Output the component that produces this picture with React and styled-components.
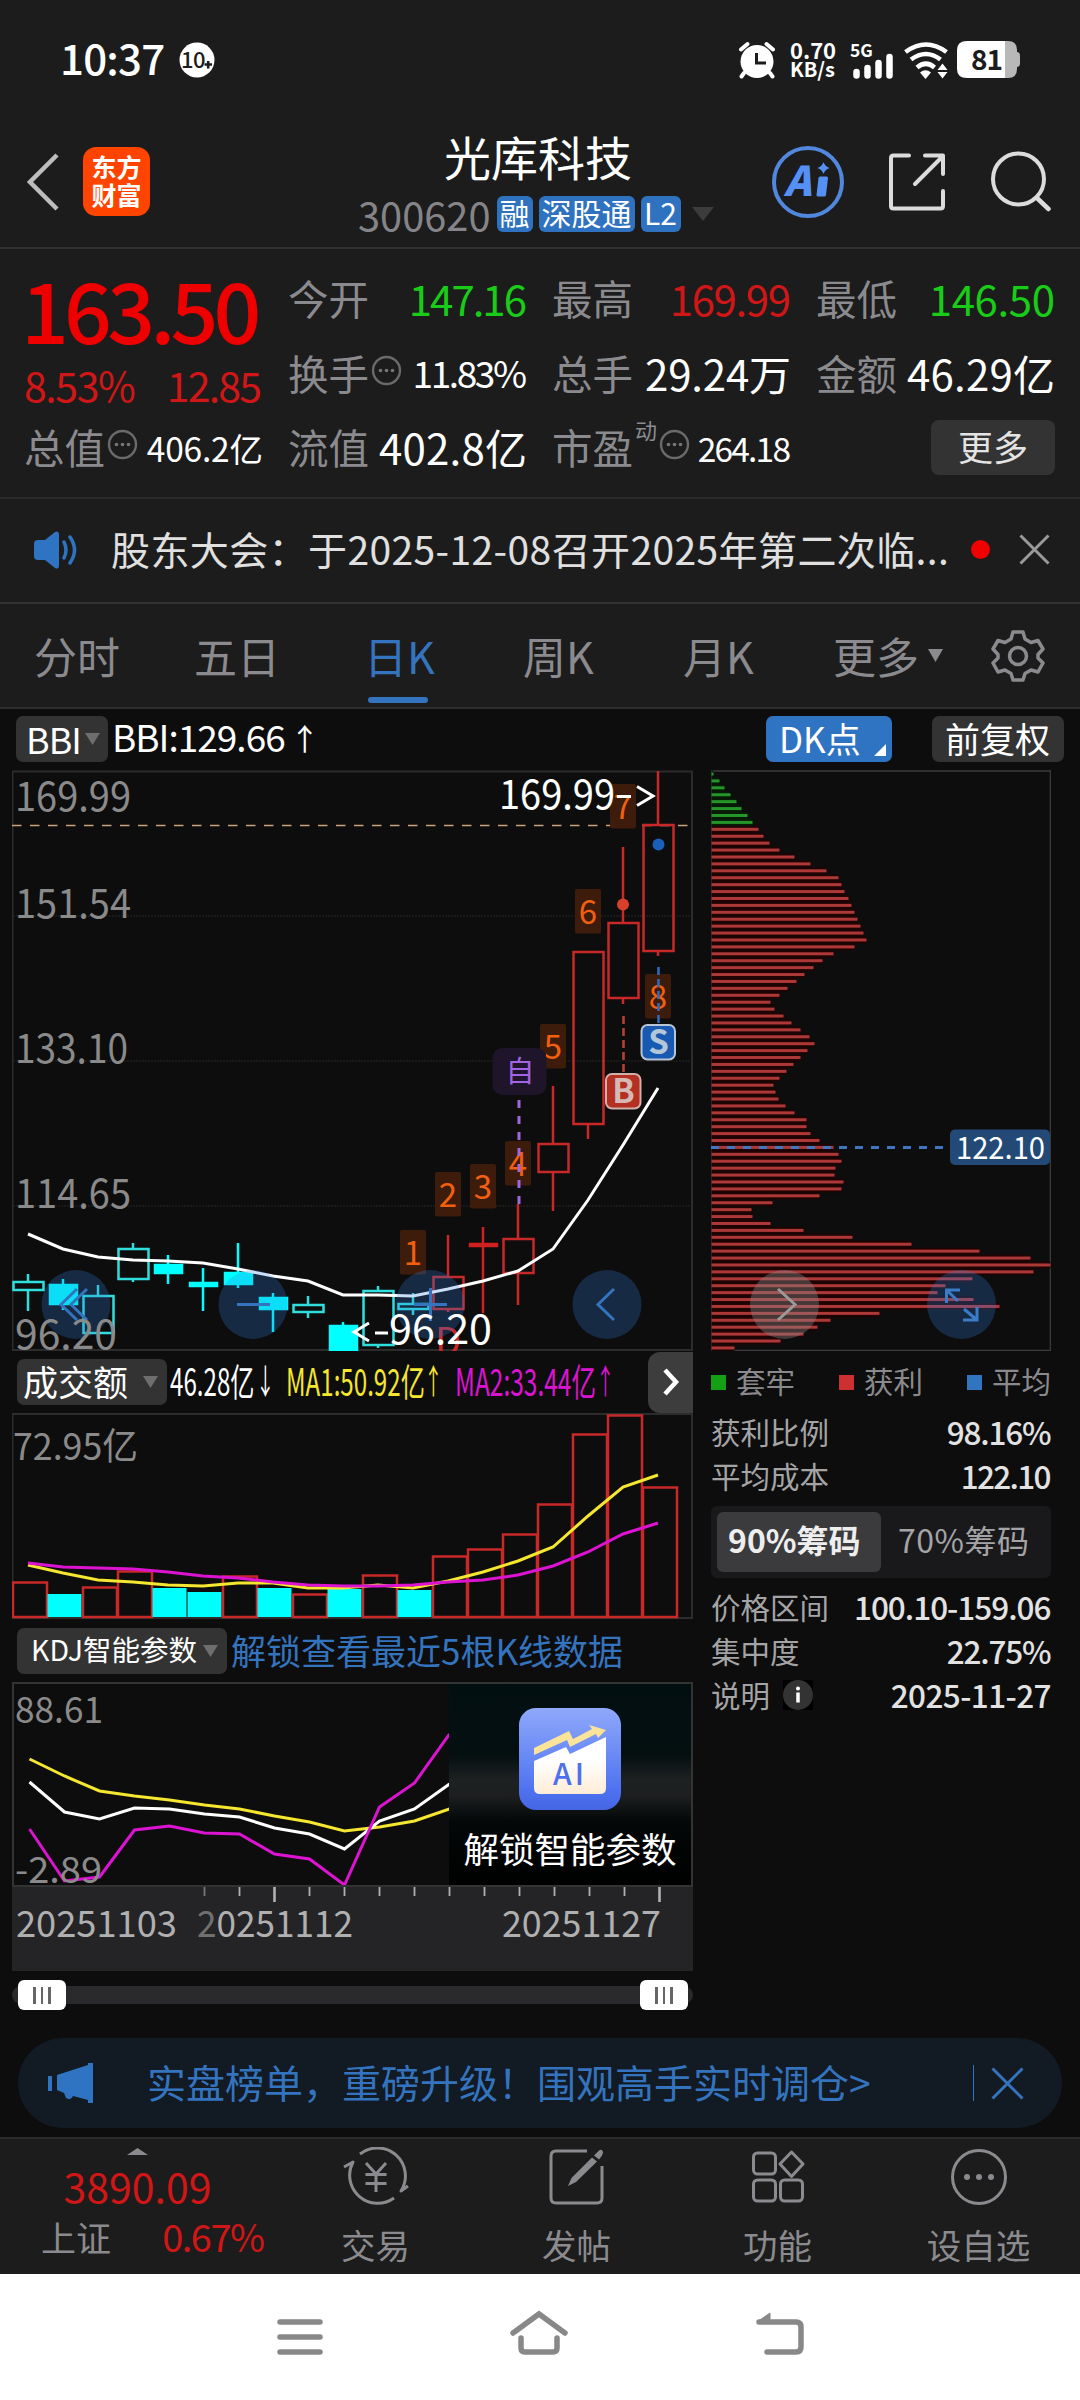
import React from 'react'
import styled, { createGlobalStyle } from 'styled-components'

const GlobalStyle = createGlobalStyle`
    * { box-sizing: border-box; }
    body {
        margin: 0;
        background: #0d0d0d;
        font-family: "Noto Sans CJK SC", "Noto Sans", sans-serif;
        color: #fff;
    }
    svg { display: block; flex-shrink: 0; }
    svg text { font-family: "Noto Sans CJK SC", "Noto Sans", sans-serif; }
`

const Screen = styled.div`
    width: 1080px;
    height: 2400px;
    display: flex;
    flex-direction: column;
    overflow: hidden;
    white-space: nowrap;
`

/* plain text piece: size, colour, tracking */
const Txt = styled.span`
    font-size: ${props => props.$size || 41}px;
    font-weight: ${props => props.$weight || 400};
    color: ${props => props.$color || '#fff'};
    letter-spacing: ${props => props.$ls || 0}px;
    margin-right: ${props => -(props.$ls || 0)}px;
    line-height: 1;
`

const StatusBar = styled.div`
    height: 119px;
    padding: 0 59px 0 60px;
    display: flex;
    align-items: center;
    justify-content: space-between;
    background: #1c1c1c;
`
const StatusSide = styled.div`
    display: flex;
    align-items: center;
    gap: ${props => props.$gap || 0}px;
    ${Txt} { margin-top: -5px; }
`
const Speed = styled.div`
    font-size: 20px;
    line-height: 20px;
    font-weight: 700;
    width: 45px;
    margin: -2px 15px 0 14px;
    text-align: center;
    div:first-child { font-size: 22px; }
`

const Header = styled.div`
    height: 130px;
    padding: 0 29px 0 26px;
    display: flex;
    align-items: center;
    background: #1c1c1c;
    border-bottom: 2px solid #303030;
    > svg { margin-top: -3px; }
`
const AppLogo = styled.div`
    width: 67px;
    height: 69px;
    margin-left: 23px;
    margin-top: -3px;
    border-radius: 13px;
    background: #ff4400;
    font-size: 25px;
    font-weight: 700;
    line-height: 28px;
    padding-top: 5px;
    text-align: center;
`
const TitleBox = styled.div`
    flex: 1;
    padding: 4px 0 0 210px;
    height: 130px;
`
const Title = styled.div`
    font-size: 47px;
    line-height: 67px;
    padding-left: 84px;
`
const CodeRow = styled.div`
    display: flex;
    align-items: center;
    gap: 6px;
    height: 36px;
    margin: 7px 0 0 -2px;
    ${Txt} { margin: -1px 0 0 0; }
    svg { margin-left: 5px; }
`
const Tag = styled.span`
    height: 36px;
    line-height: 33px;
    width: ${props => props.$w}px;
    border-radius: 6px;
    background: #2f72c0;
    font-size: 30px;
    display: flex;
    justify-content: center;
`
const HeaderIcons = styled.div`
    display: flex;
    align-items: center;
    gap: 41px;
    margin-top: -3px;
`

const Quote = styled.div`
    height: 250px;
    padding: 12px 24px 0 25px;
    background: #1c1c1c;
    border-bottom: 2px solid #2a2a2a;
    display: grid;
    grid-template-columns: repeat(4, 238px);
    grid-template-rows: repeat(3, 74.5px);
    column-gap: 26px;
`
const Cell = styled.div`
    display: flex;
    align-items: center;
    justify-content: space-between;
`
const Label = styled.span`
    display: flex;
    align-items: center;
    gap: 2px;
    font-size: 40.5px;
    line-height: 1;
    color: #8b8b8f;
    margin-left: -1px;
    sup {
        font-size: 22px;
        line-height: 1;
        align-self: flex-start;
        margin-top: -9px;
        vertical-align: baseline;
    }
    svg { margin-top: -5px; }
`
const PriceCell = styled.div`
    grid-row: span 2;
    display: flex;
    flex-direction: column;
    margin-right: 1px;
`
const Price = styled.div`
    font-size: 84px;
    line-height: 94px;
    font-weight: 500;
    letter-spacing: -4.8px;
    color: #ee0000;
    margin-left: -4px;
`
const Change = styled.div`
    display: flex;
    justify-content: space-between;
    padding-top: 9px;
    margin-left: -1px;
`
const MoreButton = styled.div`
    justify-self: end;
    align-self: center;
    width: 124px;
    height: 55px;
    margin-top: 1px;
    border-radius: 8px;
    background: #333;
    color: #e4e4e4;
    font-size: 35px;
    line-height: 51px;
    text-align: center;
`

const Notice = styled.div`
    height: 105px;
    padding: 0 29px 2px 33px;
    display: flex;
    align-items: center;
    background: #1c1c1c;
    border-bottom: 2px solid #333;
`
const NoticeText = styled.div`
    width: 849px;
    margin-left: 32px;
    font-size: 39px;
    line-height: 56px;
    letter-spacing: 0.4px;
    color: #e0e0e0;
    margin-top: -4px;
`
const Dot = styled.div`
    width: 19px;
    height: 19px;
    border-radius: 50%;
    background: #f00000;
    margin: 0 29px 0 11px;
`

const Tabs = styled.div`
    height: 105px;
    padding: 0 35px 0 34px;
    display: grid;
    grid-template-columns: 160px 170px 159px 160px 150px 1fr auto;
    align-items: center;
    background: #1c1c1c;
    border-bottom: 2px solid #2e2e2e;
`
const Tab = styled.div`
    display: flex;
    align-items: center;
    gap: 9px;
    font-size: 43px;
    height: 100px;
    color: ${props => props.$active ? '#3473bd' : '#8b8b8f'};
    span {
        height: 92px;
        line-height: 90px;
        display: flex;
        flex-direction: column;
    }
    span::after {
        content: '';
        width: 60px;
        height: 6px;
        margin: -3px 0 0 4px;
        border-radius: 3px;
        flex-shrink: 0;
        background: ${props => props.$active ? '#3473bd' : 'none'};
    }
`

const Toolbar = styled.div`
    height: 61px;
    padding: 7px 16px 0 16px;
    display: flex;
    align-items: flex-start;
`
const Chip = styled.div`
    height: 46px;
    width: ${props => props.$w}px;
    padding: 0 ${props => props.$pr || 8}px 0 ${props => props.$pl || 8}px;
    border-radius: 7px;
    background: ${props => props.$blue ? '#2f74c2' : '#333'};
    font-size: ${props => props.$size || 35}px;
    letter-spacing: ${props => props.$ls || 0}px;
    display: flex;
    align-items: center;
    justify-content: space-between;
    line-height: 42px;
    flex-shrink: 0;
    b { font-weight: 400; margin-top: -3px; }
    & + & { margin-left: 40px; }
`
const ToolText = styled.div`
    margin: 2px 0 0 4px;
    flex: 1;
    display: flex;
    gap: 4px;
    align-items: center;
`

const Main = styled.div`
    display: grid;
    grid-template-columns: 681px 340px;
    column-gap: 18px;
    padding-left: 12px;
    height: 1261px;
`
const Column = styled.div`
    display: flex;
    flex-direction: column;
`
const IndicatorRow = styled.div`
    height: ${props => props.$h}px;
    display: flex;
    align-items: center;
    padding-left: 5px;
    > ${Txt} { margin: -3px 0 0 4px; }
`
/* condensed figures, keeps the height and squeezes the width */
const Narrow = styled.div`
    width: ${props => props.$w}px;
    display: flex;
    font-size: 38px;
    line-height: 44px;
    margin: -4px -3px 0 3px;
    color: ${props => props.$color};
    span {
        width: ${props => props.$tw}px;
        flex-shrink: 0;
        transform: scaleX(${props => props.$k || 0.635});
        transform-origin: left center;
    }
    em {
        font-style: normal;
        font-size: 34px;
        width: 18px;
        transform: scaleX(0.55);
        transform-origin: left center;
    }
`
const NextButton = styled.div`
    margin-left: auto;
    width: 45px;
    height: 61px;
    border-radius: 12px 0 0 12px;
    background: #3d3d3d;
    display: flex;
    align-items: center;
    justify-content: center;
`
const Kdj = styled.div`
    display: flex;
    height: 205px;
    border: 2px solid #333;
`
const Locked = styled.div`
    flex: 1;
    display: flex;
    flex-direction: column;
    align-items: center;
    padding-top: 24px;
    background: linear-gradient(#020f10 0%, #040f10 35%, #1e2122 48%, #1c1e1f 56%, #040808 68%, #000 100%);
    div {
        font-size: 35.5px;
        line-height: 50px;
        margin-top: 13px;
    }
`
const Slider = styled.div`
    height: 18px;
    margin-top: 15px;
    padding: 0 5px 0 6px;
    border-radius: 9px;
    background: #2a2a2c;
    display: flex;
    align-items: center;
    justify-content: space-between;
`
const Handle = styled.div`
    width: 48px;
    height: 30px;
    border-radius: 6px;
    background: #fff;
    display: flex;
    align-items: center;
    justify-content: center;
    gap: 5px;
    i {
        width: 2.5px;
        height: 17px;
        background: #666;
    }
`

const Legend = styled.div`
    display: flex;
    justify-content: space-between;
    height: 60px;
    align-items: center;
    font-size: 29.5px;
    line-height: 1;
    color: #8a8a8e;
`
const LegendItem = styled.div`
    display: flex;
    align-items: center;
    gap: 10px;
    &::before {
        content: '';
        width: 15px;
        height: 15px;
        margin-top: 3px;
        background: ${props => props.$color};
    }
`
const InfoRow = styled.div`
    height: 44px;
    display: flex;
    align-items: center;
    justify-content: space-between;
    font-size: 29.5px;
    line-height: 36px;
    padding-bottom: 4px;
    color: #a4a4a6;
    b {
        font-weight: 500;
        font-size: 31.5px;
        letter-spacing: ${props => props.$ls || -1}px;
        margin-right: ${props => -(props.$ls || -1) - 0.5}px;
        color: #e2e2e2;
    }
    span {
        display: flex;
        align-items: center;
        gap: 13px;
    }
    svg { margin-top: 2px; }
`
const Segments = styled.div`
    height: 72px;
    margin: 7px 0 8px;
    padding: 6px;
    border-radius: 6px;
    background: #19191b;
    display: flex;
`
const Segment = styled.div`
    width: 164px;
    height: 60px;
    padding-left: 11px;
    border-radius: 6px;
    font-size: 32px;
    line-height: 55px;
    letter-spacing: ${props => props.$active ? 0 : 0.5}px;
    background: ${props => props.$active ? '#3b3b3d' : 'none'};
    color: ${props => props.$active ? '#eee' : '#a4a4a6'};
    font-weight: ${props => props.$active ? 700 : 400};
    & + & { padding-left: 17px; }
`

const Banner = styled.div`
    height: 90px;
    margin: 7px 18px 9px;
    padding: 0 38px 0 29px;
    border-radius: 45px;
    background: #121a24;
    display: flex;
    align-items: center;
    color: #3473bd;
    font-size: 39px;
    line-height: 56px;
    p { margin: -5px 0 0 54px; flex: 1; }
    i {
        width: 1.5px;
        height: 36px;
        margin-right: 17px;
        background: #3473bd;
    }
`

const BottomNav = styled.div`
    height: 137px;
    display: grid;
    grid-template-columns: 275px repeat(4, 201px);
    background: #1c1c1c;
    border-top: 2px solid #2c2c2c;
`
const IndexBox = styled.div`
    display: flex;
    flex-direction: column;
    align-items: center;
    padding-top: 9px;
    > ${Txt} { margin-top: 10px; }
    > div {
        display: flex;
        align-items: center;
        justify-content: space-between;
        width: 224px;
        margin: 11px 0 0 31px;
    }
`
const NavItem = styled.div`
    display: flex;
    flex-direction: column;
    align-items: center;
    padding-top: 8px;
    font-size: 34.5px;
    line-height: 40px;
    color: #8b8b8f;
    div { margin-top: 17px; }
`
const SystemNav = styled.div`
    flex: 1;
    background: #fff;
    display: flex;
    padding: 36px 0 0 277px;
    gap: 187px;
`

const BLUE = '#3473bd'
const RED = '#c82828'
const CYAN = '#00ffff'

const MoreDots = () => (
    <svg width="31" height="31" viewBox="0 0 31 31">
        <circle cx="15.5" cy="15.5" r="13.5" fill="none" stroke="#6a6a6c" strokeWidth="2.4" />
        {[9.5, 15.5, 21.5].map(x => <circle key={x} cx={x} cy="15.5" r="1.8" fill="#77777a" />)}
    </svg>
)

const Caret = ({ w = 15, h = 12, color = '#6e6e6e', up }) => (
    <svg width={w} height={h}>
        <path d={up ? `M0 ${h}L${w / 2} 0L${w} ${h}Z` : `M0 0H${w}L${w / 2} ${h}Z`} fill={color} />
    </svg>
)

const Cross = ({ size, color }) => (
    <svg width={size} height={size}>
        <path d={`M1.5 1.5L${size - 1.5} ${size - 1.5}M${size - 1.5} 1.5L1.5 ${size - 1.5}`} stroke={color} strokeWidth="3" />
    </svg>
)

const points = (ys, x0 = 28) => ys.map((y, i) => `${x0 + i * 35},${y}`).join(' ')

// type, high, body top, body bottom, low; o = hollow cyan, s = solid cyan, r = hollow red, d = solid red
const candles = [
    ['o', 1274, 1282, 1290, 1311],
    ['s', 1279, 1284, 1305, 1310],
    ['o', 1285, 1296, 1333, 1333],
    ['o', 1243, 1249, 1279, 1282],
    ['s', 1255, 1264, 1274, 1284],
    ['s', 1268, 1282, 1287, 1311],
    ['s', 1243, 1272, 1285, 1288],
    ['s', 1293, 1297, 1310, 1332],
    ['o', 1296, 1305, 1312, 1318],
    ['s', 1322, 1325, 1351, 1351],
    ['o', 1286, 1291, 1345, 1348],
    ['o', 1293, 1304, 1309, 1315],
    ['r', 1235, 1277, 1309, 1312],
    ['d', 1227, 1243, 1247, 1313],
    ['r', 1204, 1239, 1273, 1305],
    ['r', 1086, 1144, 1172, 1211],
    ['r', 951, 952, 1124, 1139],
    ['r', 847, 923, 998, 1004],
    ['r', 771, 825, 951, 956],
]
const bbi = [1234, 1249, 1257, 1260, 1261, 1263, 1269, 1276, 1281, 1295, 1295, 1296, 1289, 1281, 1271, 1249, 1200, 1145, 1088]
const counts = [[1, 1230], [2, 1172], [3, 1164], [4, 1141], [5, 1024], [6, 889], [7, 784], [8, 974]]

const Candle = ({ x, data }) => {
    const [type, high, top, bottom, low] = data
    const hollow = type === 'o' || type === 'r'
    const color = type === 'o' ? '#30dede' : type === 's' ? CYAN : type === 'r' ? RED : '#d02020'
    return (
        <g stroke={color} strokeWidth="2.5">
            <path d={`M${x} ${high}V${top}M${x} ${bottom}V${low}`} />
            {hollow
                ? <rect x={x - 14.5} y={top} width="30" height={bottom - top} fill="none" />
                : <rect x={x - 14} y={top} width="29" height={bottom - top} fill={color} strokeWidth="0.5" />}
        </g>
    )
}

const Fit = ({ x, y, w, size = 41, color = '#8a8a8a', children, ...rest }) => (
    <text x={x} y={y} fontSize={size} fill={color} textLength={w} lengthAdjust="spacingAndGlyphs" {...rest}>{children}</text>
)

const KLine = () => (
    <svg width="681" height="581" viewBox="12 770 681 581">
        <rect x="12.5" y="771.5" width="679.5" height="578.5" fill="none" stroke="#2c2c2c" strokeWidth="2" />
        {[916, 1061, 1206].map(y => <path key={y} d={`M13 ${y}H692`} stroke="#262626" strokeDasharray="2 1" strokeWidth="1.2" />)}
        <path d="M12 825.5H690" stroke="#c9a27c" strokeWidth="1.4" strokeDasharray="9.5 8.5" />
        {counts.map(([n, y], i) => (
            <g key={n}>
                <rect x={400 + i * 35} y={y} width="26" height="44.5" rx="2" fill="#3d1c0c" />
                <text x={413 + i * 35} y={y + 35} fontSize="33" fill="#f2600f" textAnchor="middle">{n}</text>
            </g>
        ))}
        {candles.map((c, i) => <Candle key={i} x={28 + i * 35} data={c} />)}
        <text x="435" y="1355" fontSize="38" fill={RED}>D</text>
        <rect x="492.5" y="1048" width="54" height="47" rx="10" fill="#1f152b" />
        <text x="520" y="1082" fontSize="29" fill="#a264e4" textAnchor="middle">自</text>
        <path d="M519 1100V1204" stroke="#a068e0" strokeWidth="3" strokeDasharray="8 8" />
        <circle cx="623" cy="904.5" r="6" fill="#d8402c" />
        <circle cx="658.5" cy="844.5" r="6" fill="#1a5fb8" />
        <path d="M658.5 967V1023" stroke="#3468b8" strokeWidth="2.6" strokeDasharray="8 4" />
        <path d="M623.5 1016V1072" stroke="#b34038" strokeWidth="2.6" strokeDasharray="8 4" />
        <rect x="641.5" y="1025" width="33.5" height="34.5" rx="6" fill="#185ab2" stroke="#b8c4d4" strokeWidth="2" />
        <text x="658.5" y="1054" fontSize="33" fontWeight="700" fill="#b4c6da" textAnchor="middle">S</text>
        <rect x="606" y="1074" width="34.5" height="34.5" rx="6" fill="#b43022" stroke="#d0b0a8" strokeWidth="2" />
        <text x="623.5" y="1103" fontSize="33" fontWeight="700" fill="#d6b8b4" textAnchor="middle">B</text>
        <polyline points={points(bbi)} fill="none" stroke="#fff" strokeWidth="3" />
        {[76, 253, 430, 607].map(x => <circle key={x} cx={x} cy="1304.5" r="34.5" fill="rgba(49,129,225,0.26)" />)}
        <g fill="none" stroke={BLUE} strokeWidth="3">
            <path d="M77 1289L61 1304.500L77 1320M87 1289L71 1304.500L87 1320" />
            <path d="M237 1304.500H270" />
            <path d="M414 1304.500H447M430.500 1288V1321" />
            <path d="M614 1289L598 1304.500L614 1320" />
        </g>
        <Fit x="15" y="811" w="116">169.99</Fit>
        <Fit x="15" y="917.500" w="116">151.54</Fit>
        <Fit x="15" y="1063" w="113">133.10</Fit>
        <Fit x="15" y="1208" w="116">114.65</Fit>
        <Fit x="15" y="1348.500" w="102">96.20</Fit>
        <Fit x="499" y="809" w="116" color="#fff">169.99</Fit>
        <path d="M617 796.500H631M637 786.500L653 796L637 805.500" fill="none" stroke="#fff" strokeWidth="3" />
        <path d="M369 1323L354 1332L369 1341M375 1333H388" fill="none" stroke="#fff" strokeWidth="3" />
        <Fit x="389" y="1344" w="103" color="#fff">96.20</Fit>
    </svg>
)

// top of each bar, solid when the day closed lower
const volumes = [1582, 1594, 1587, 1571, 1588, 1592, 1576, 1588, 1594, 1589, 1575, 1590, 1556, 1549, 1534, 1504, 1434, 1415, 1487]
const downDays = [1, 4, 5, 7, 9, 11]
const ma1 = [1565, 1573, 1580, 1582, 1585, 1586, 1583, 1583, 1588, 1588, 1585, 1588, 1581, 1572, 1561, 1547, 1516, 1487, 1475]
const ma2 = [1563, 1567, 1568, 1569, 1572, 1576, 1578, 1582, 1585, 1586, 1586, 1585, 1582, 1580, 1575, 1566, 1552, 1534, 1523]

const Volume = () => (
    <svg width="681" height="206" viewBox="12 1413 681 206">
        <rect x="12.5" y="1414" width="679.5" height="204" fill="none" stroke="#2c2c2c" strokeWidth="2" />
        <Fit x="13" y="1459.500" w="125" size="37">72.95亿</Fit>
        {volumes.map((y, i) => downDays.includes(i)
            ? <rect key={i} x={12.5 + i * 35} y={y} width="34" height={1617 - y} fill={CYAN} />
            : <rect key={i} x={13 + i * 35} y={y + 0.5} width="34" height={1616.500 - y} fill="none" stroke={RED} strokeWidth="2.5" />)}
        <polyline points={points(ma1)} fill="none" stroke="#f5e630" strokeWidth="3" />
        <polyline points={points(ma2)} fill="none" stroke="#dc14d2" strokeWidth="3" />
    </svg>
)

const lineD = [1759, 1776, 1791, 1796, 1800, 1805, 1809, 1816, 1822, 1831, 1827, 1821, 1809]
const lineK = [1782, 1812, 1819, 1808, 1809, 1814, 1817, 1828, 1834, 1849, 1821, 1809, 1784]
const lineJ = [1829, 1881, 1877, 1830, 1826, 1833, 1834, 1854, 1859, 1885, 1807, 1783, 1734]

const KdjChart = () => (
    <svg width="435" height="201" viewBox="14 1684 435 201">
        <g fill="none" strokeWidth="3">
            <polyline points={points(lineD, 29.5)} stroke="#f5e630" />
            <polyline points={points(lineK, 29.5)} stroke="#fff" />
            <polyline points={points(lineJ, 29.5)} stroke="#dc14d2" />
        </g>
        <Fit x="15" y="1722.500" w="88" size="37">88.61</Fit>
        <Fit x="15" y="1883" w="87" size="37">-2.89</Fit>
    </svg>
)

const AiBadge = () => (
    <svg width="102" height="102" viewBox="0 0 102 102">
        <defs>
            <linearGradient id="tile" x1="0" y1="0" x2="0" y2="1">
                <stop offset="0" stopColor="#8fa9fb" />
                <stop offset="0.8" stopColor="#4f73f0" />
                <stop offset="1" stopColor="#4565e4" />
            </linearGradient>
            <linearGradient id="card" x1="0" y1="0" x2="0" y2="1">
                <stop offset="0.4" stopColor="#fff" />
                <stop offset="1" stopColor="#feecd6" />
            </linearGradient>
        </defs>
        <rect width="102" height="102" rx="17" fill="url(#tile)" />
        <path d="M15 53L47 39L51 46L87 29V80Q87 86 81 86H21Q15 86 15 80Z" fill="url(#card)" />
        <path d="M15 40L50 23L54 31L73 21L70 17L87 22L79 30L77 26L51 39L48 32L15 47Z" fill="#fbe39a" />
        <text x="51" y="77" fontSize="30" fontWeight="500" fill="#4d70ec" textAnchor="middle" letterSpacing="3">AI</text>
    </svg>
)

const TimeAxis = () => (
    <svg width="681" height="84" viewBox="12 1888 681 84">
        <rect x="12" y="1888" width="681" height="84" fill="#242426" />
        {Array.from({ length: 14 }, (_, i) => {
            const tall = i === 2 || i === 13
            return <path key={i} d={`M${204.5 + i * 35} 1888V${tall ? 1903 : 1897}`} stroke={i ? '#b0b0b0' : '#777'} strokeWidth={tall ? 2.6 : 1.8} />
        })}
        <Fit x="16" y="1938" w="161" size="37" color="#b0b0b0">20251103</Fit>
        <Fit x="197" y="1938" w="156" size="37" color="#b0b0b0"><tspan fill="#707070">2</tspan>0251112</Fit>
        <Fit x="502" y="1938" w="159" size="37" color="#b0b0b0">20251127</Fit>
    </svg>
)

const chips = [
    2, 8, 13, 19, 25, 30, 36, 41, 47, 52, 58, 68, 83, 99, 115, 127, 130, 133, 137, 140, 143, 146, 149, 152, 155, 143, 122, 111,
    102, 93, 85, 76, 68, 59, 63, 72, 80, 89, 98, 103, 96, 89, 82, 75, 68, 62, 64, 67, 74, 83, 95, 95, 99, 108, 122, 127, 130,
    124, 123, 132, 130, 108, 61, 40, 41, 59, 92, 141, 200, 268, 319, 339, 322, 261, 234, 226, 262, 288, 168, 119, 106, 92, 69, 23,
]

const ChipChart = () => (
    <svg width="340" height="581" viewBox="711 770 340 581">
        <rect x="711.5" y="771" width="339" height="579.5" fill="none" stroke="#3a3a3a" strokeWidth="1.6" />
        {chips.map((w, i) => {
            const y = 774 + i * 6.915
            return (
                <g key={i}>
                    <rect x="711.5" y={y - 3.4} width={w} height="6.900" fill={i < 8 ? '#071b07' : '#200404'} />
                    <rect x="711.5" y={y - 1.5} width={w} height="3" fill={i < 8 ? '#25962a' : '#ac3838'} />
                </g>
            )
        })}
        <path d="M711 1147.500H944" stroke="#3f78be" strokeWidth="3" strokeDasharray="8 8" />
        <rect x="950" y="1129.500" width="100" height="35.500" rx="5" fill="#234a76" />
        <Fit x="956" y="1158.500" w="89" size="31" color="#fff">122.10</Fit>
        <circle cx="784.5" cy="1304.500" r="34.500" fill="rgba(140,140,140,0.38)" />
        <path d="M778 1289L795 1304.500L778 1320" fill="none" stroke="#9a9a9a" strokeWidth="3" />
        <circle cx="961.500" cy="1304.500" r="34.500" fill="rgba(49,129,225,0.26)" />
        <path d="M960 1290H946.500V1303M946.500 1290L958 1301M963 1320H977V1307M977 1320L964 1309" fill="none" stroke="#3a7cc8" strokeWidth="3" />
    </svg>
)

const SignalIcon = styled.svg`
    margin-right: 9px;
`
const WifiIcon = styled.svg`
    margin-right: 8px;
`

const StatusIcons = () => (
    <StatusSide>
        <svg width="38" height="38" viewBox="0 0 38 38">
            <circle cx="19" cy="20.500" r="16.500" fill="#fff" />
            <path d="M3 8.500L9.500 3M35 8.500L28.500 3" stroke="#fff" strokeWidth="4" strokeLinecap="round" fill="none" />
            <path d="M6 32L3.500 35.500M32 32L34.500 35.500" stroke="#fff" strokeWidth="4" strokeLinecap="round" />
            <path d="M18.500 12V22H28" stroke="#1c1c1c" strokeWidth="3" fill="none" />
        </svg>
        <Speed><div>0.70</div><div>KB/s</div></Speed>
        <SignalIcon width="44" height="38" viewBox="0 0 44 38">
            <text x="0" y="15.500" fontSize="17.500" fontWeight="700" fill="#fff">5G</text>
            <path d="M6.500 34.500V31M17.500 34.500V27M28.500 34.500V22M39.500 34.500V16" stroke="#fff" strokeWidth="6.500" strokeLinecap="round" />
        </SignalIcon>
        <WifiIcon width="46" height="38" viewBox="0 0 46 38">
            <g fill="none" stroke="#fff" strokeWidth="4.600">
                <path d="M2.500 11Q23 -4 43.500 11" />
                <path d="M8 18.500Q23 7.500 37.500 18.500" />
                <path d="M14 26.500Q23 19 31.500 26.500" />
            </g>
            <path d="M17 31.500Q22.500 27 28 31.500L22.500 38Z" fill="#fff" />
            <path d="M34.500 29L39.500 22.500L44.500 29ZM34.500 31H44.500L39.500 37.500Z" fill="#fff" />
        </WifiIcon>
        <svg width="64" height="37" viewBox="0 0 64 37">
            <path d="M48 0H51Q60 0 60 9V28Q60 37 51 37H48Z" fill="#b8b8b8" />
            <path d="M60 11Q63 11 63 15V22Q63 26 60 26Z" fill="#b8b8b8" />
            <path d="M10 0H48V37H10Q0 37 0 28V9Q0 0 10 0Z" fill="#fff" />
            <text x="29.500" y="28.500" fontSize="28" fontWeight="700" fill="#1c1c1c" textAnchor="middle" letterSpacing="-1">81</text>
        </svg>
    </StatusSide>
)

const quoteCells = [
    { label: '今开', value: '147.16', color: '#18cc18', ls: -2 },
    { label: '最高', value: '169.99', color: '#d01616', ls: -1.4 },
    { label: '最低', value: '146.50', color: '#18cc18', ls: -0.4 },
    { label: '换手', value: '11.83%', size: 37, dots: true, ls: -2.4 },
    { label: '总手', value: '29.24万', ls: -0.2 },
    { label: '金额', value: '46.29亿', ls: 0.2 },
    { label: '总值', value: '406.2亿', size: 33.500, dots: true, ls: -0.2 },
    { label: '流值', value: '402.8亿', ls: 0.2 },
    { label: '市盈', sup: '动', value: '264.18', size: 33.500, dots: true, ls: -1.8 },
]

const App = () => {
    return (
        <Screen>
            <GlobalStyle />
            <StatusBar>
                <StatusSide $gap={14}>
                    <Txt $size={42} $weight={500} $ls={-0.8}>10:37</Txt>
                    <svg width="36" height="36" viewBox="0 0 36 36">
                        <circle cx="18" cy="18" r="17.500" fill="#fff" />
                        <text x="2" y="26" fontSize="22" fontWeight="500" fill="#1c1c1c" letterSpacing="-0.5">10</text>
                        <path d="M25.500 22.500H33M29.200 19V26.500" stroke="#1c1c1c" strokeWidth="2.6" />
                    </svg>
                </StatusSide>
                <StatusIcons />
            </StatusBar>

            <Header>
                <svg width="34" height="62" viewBox="0 0 34 62">
                    <path d="M31 4L4 31L31 58" fill="none" stroke="#bdbdbd" strokeWidth="4.500" />
                </svg>
                <AppLogo>东方<br />财富</AppLogo>
                <TitleBox>
                    <Title>光库科技</Title>
                    <CodeRow>
                        <Txt $size={39.800} $color="#858589">300620</Txt>
                        <Tag $w={36}>融</Tag>
                        <Tag $w={96}>深股通</Tag>
                        <Tag $w={40}>L2</Tag>
                        <Caret w={22} h={14} color="#3c3c3c" />
                    </CodeRow>
                </TitleBox>
                <HeaderIcons>
                    <svg width="74" height="74" viewBox="0 0 74 74">
                        <circle cx="37" cy="37" r="34" fill="none" stroke="#5187dd" strokeWidth="4" />
                        <text x="13" y="50.500" fontSize="41" fontWeight="900" fontStyle="italic" fill="#5590f5">A</text>
                        <path d="M49 31.500H55.500Q57 31.500 57 33L55 50Q54.800 51.500 53.500 51.500H47Q45.500 51.500 45.500 50L47.500 33Q47.700 31.500 49 31.500Z" fill="#5590f5" />
                        <path d="M52.500 17Q54 21.500 58.500 23Q54 24.500 52.500 29Q51 24.500 46.500 23Q51 21.500 52.500 17Z" fill="#5590f5" />
                    </svg>
                    <svg width="62" height="62" viewBox="0 0 62 62">
                        <path d="M23 4.500H7.500Q5 4.500 5 7V55Q5 57.500 7.500 57.500H54.500Q57 57.500 57 55V40M39 4.500H57V23M56 6L29 33" fill="none" stroke="#dcdcdc" strokeWidth="4" strokeLinecap="round" strokeLinejoin="round" />
                    </svg>
                    <svg width="62" height="62" viewBox="0 0 62 62">
                        <circle cx="29.500" cy="28" r="25.500" fill="none" stroke="#dcdcdc" strokeWidth="4" />
                        <path d="M48 47L59.500 58" stroke="#dcdcdc" strokeWidth="4.500" strokeLinecap="round" />
                    </svg>
                </HeaderIcons>
            </Header>

            <Quote>
                <PriceCell>
                    <Price>163.50</Price>
                    <Change>
                        <Txt $color="#d01616" $ls={-1.400}>8.53%</Txt>
                        <Txt $color="#d01616" $ls={-1.800}>12.85</Txt>
                    </Change>
                </PriceCell>
                {quoteCells.map(c => (
                    <Cell key={c.label}>
                        <Label>{c.label}{c.sup && <sup>{c.sup}</sup>}{c.dots && <MoreDots />}</Label>
                        <Txt $size={c.size || 42} $color={c.color} $ls={c.ls}>{c.value}</Txt>
                    </Cell>
                ))}
                <MoreButton>更多</MoreButton>
            </Quote>

            <Notice>
                <svg width="46" height="38" viewBox="0 0 46 38">
                    <path d="M5 9H12L22 1Q26 -1 26 4V34Q26 39 22 37L12 29H5Q1 29 1 25V13Q1 9 5 9Z" fill="#2f74c2" />
                    <path d="M31 11Q35 19 31 27M37 6Q46 19 37 32" fill="none" stroke="#2f74c2" strokeWidth="3.500" strokeLinecap="round" />
                </svg>
                <NoticeText>股东大会：于2025-12-08召开2025年第二次临...</NoticeText>
                <Dot />
                <Cross size={31} color="#9a9a9a" />
            </Notice>

            <Tabs>
                <Tab><span>分时</span></Tab>
                <Tab><span>五日</span></Tab>
                <Tab $active><span>日K</span></Tab>
                <Tab><span>周K</span></Tab>
                <Tab><span>月K</span></Tab>
                <Tab><span>更多</span><Caret color="#8b8b8f" w={15} h={13} /></Tab>
                <svg width="54" height="54" viewBox="0 0 54 54">
                    <path d="M22 3H32L34 10L40 13.500L47 11.500L52 20L47 25.500V29L52 34L47 43L40 41L34 44.500L32 51H22L20 44.500L14 41L7 43L2 34L7 29V25.500L2 20L7 11.500L14 13.500L20 10Z" fill="none" stroke="#8b8b8f" strokeWidth="3.500" strokeLinejoin="round" />
                    <circle cx="27" cy="27" r="8.500" fill="none" stroke="#8b8b8f" strokeWidth="3.500" />
                </svg>
            </Tabs>

            <Toolbar>
                <Chip $w={92} $pl={10} $pr={8} $size={36} $ls={-1}><b>BBI</b><Caret w={15} /></Chip>
                <ToolText><Txt $size={37} $ls={-1}>BBI:129.66</Txt><Txt $size={30}>↑</Txt></ToolText>
                <Chip $blue $w={126} $pl={13} $pr={6}>
                    <b>DK点</b>
                    <svg width="12" height="34"><path d="M12 22V34H0Z" fill="#fff" /></svg>
                </Chip>
                <Chip $w={132} $pl={13}><b>前复权</b></Chip>
            </Toolbar>

            <Main>
                <Column>
                    <KLine />
                    <IndicatorRow $h={62}>
                        <Chip $w={150} $pl={6} $pr={9}><b>成交额</b><Caret w={15} h={12} /></Chip>
                        <Narrow $w={116} $tw={86} $color="#fff"><span>46.28亿</span><em>↓</em></Narrow>
                        <Narrow $w={169} $tw={138} $color="#f5e630"><span>MA1:50.92亿</span><em>↑</em></Narrow>
                        <Narrow $w={160} $tw={141} $k={0.645} $color="#dc14d2"><span>MA2:33.44亿</span><em>↑</em></Narrow>
                        <NextButton>
                            <svg width="18" height="30" viewBox="0 0 18 30"><path d="M3 3L14 15L3 27" fill="none" stroke="#fff" strokeWidth="4.500" /></svg>
                        </NextButton>
                    </IndicatorRow>
                    <Volume />
                    <IndicatorRow $h={63}>
                        <Chip $w={210} $pl={14} $pr={9} $size={28.500}><b>KDJ智能参数</b><Caret w={15} h={12} /></Chip>
                        <Txt $size={35} $color={BLUE}>解锁查看最近5根K线数据</Txt>
                    </IndicatorRow>
                    <Kdj>
                        <KdjChart />
                        <Locked>
                            <AiBadge />
                            <div>解锁智能参数</div>
                        </Locked>
                    </Kdj>
                    <TimeAxis />
                    <Slider>
                        <Handle><i /><i /><i /></Handle>
                        <Handle><i /><i /><i /></Handle>
                    </Slider>
                </Column>

                <Column>
                    <ChipChart />
                    <Legend>
                        <LegendItem $color="#14a014">套牢</LegendItem>
                        <LegendItem $color="#cc3030">获利</LegendItem>
                        <LegendItem $color="#3174c0">平均</LegendItem>
                    </Legend>
                    <InfoRow $ls={-1.200}>获利比例<b>98.16%</b></InfoRow>
                    <InfoRow $ls={-1.700}>平均成本<b>122.10</b></InfoRow>
                    <Segments>
                        <Segment $active>90%筹码</Segment>
                        <Segment>70%筹码</Segment>
                    </Segments>
                    <InfoRow $ls={-1}>价格区间<b>100.10-159.06</b></InfoRow>
                    <InfoRow $ls={-1.200}>集中度<b>22.75%</b></InfoRow>
                    <InfoRow $ls={-0.600}>
                        <span>
                            说明
                            <svg width="30" height="30" viewBox="0 0 30 30">
                                <rect width="30" height="30" fill="#000" />
                                <circle cx="15" cy="15" r="15" fill="#333" />
                                <circle cx="15" cy="8.500" r="2" fill="#fff" />
                                <path d="M15 12.500V22.500" stroke="#fff" strokeWidth="3.500" />
                            </svg>
                        </span>
                        <b>2025-11-27</b>
                    </InfoRow>
                </Column>
            </Main>

            <Banner>
                <svg width="46" height="40" viewBox="0 0 46 40">
                    <path d="M1 13H5V28H1ZM10 12L41 2V0H46V40H41V37L26 33Q24 38 19 35L17 30L10 27Z" fill="#2f74c2" />
                </svg>
                <p>实盘榜单，重磅升级！围观高手实时调仓&gt;</p>
                <i />
                <Cross size={33} color={BLUE} />
            </Banner>

            <BottomNav>
                <IndexBox>
                    <Caret up w={21} h={7} color="#8b8b8f" />
                    <Txt $size={41} $color="#d01616">3890.09</Txt>
                    <div>
                        <Txt $size={35} $color="#8b8b8f">上证</Txt>
                        <Txt $size={38} $color="#d01616" $ls={-1.500}>0.67%</Txt>
                    </div>
                </IndexBox>
                <NavItem>
                    <svg width="66" height="60" viewBox="0 0 66 60">
                        <g fill="none" stroke="#8b8b8f" strokeWidth="3">
                            <path d="M17 7A28 28 0 0 1 58 44L65 39M51 51A28 28 0 0 1 10 15L1 20" strokeLinejoin="round" />
                            <path d="M23 16L33 27L43 16M33 27V45M22.500 27.500H43.500M22.500 36.500H43.500" />
                        </g>
                    </svg>
                    <div>交易</div>
                </NavItem>
                <NavItem>
                    <svg width="58" height="60" viewBox="0 0 58 60">
                        <path d="M39 4H8Q3 4 3 9V51Q3 56 8 56H49Q54 56 54 51V19" fill="none" stroke="#8b8b8f" strokeWidth="3" />
                        <path d="M44 10.500L49 14.500L28 35L20 39L23.500 31ZM46 8.500L51 3.500Q54 1.500 55 5Q55 8 51 12.500Z" fill="#8b8b8f" />
                    </svg>
                    <div>发帖</div>
                </NavItem>
                <NavItem>
                    <svg width="54" height="60" viewBox="0 0 54 60">
                        <g fill="none" stroke="#8b8b8f" strokeWidth="3">
                            <rect x="2.500" y="6" width="22" height="21" rx="4" />
                            <rect x="2.500" y="33" width="22" height="21" rx="4" />
                            <rect x="29.500" y="33" width="22" height="21" rx="4" />
                            <path d="M40.500 5L52 17L40.500 29.500L29 17Z" strokeLinejoin="round" />
                        </g>
                    </svg>
                    <div>功能</div>
                </NavItem>
                <NavItem>
                    <svg width="58" height="60" viewBox="0 0 58 60">
                        <circle cx="29" cy="30" r="26.500" fill="none" stroke="#8b8b8f" strokeWidth="3" />
                        {[17, 29, 41].map(x => <circle key={x} cx={x} cy="30" r="3" fill="#8b8b8f" />)}
                    </svg>
                    <div>设自选</div>
                </NavItem>
            </BottomNav>

            <SystemNav>
                <svg width="46" height="48" viewBox="0 0 46 48">
                    <path d="M3 12H43M3 27H43M3 42H43" stroke="#888" strokeWidth="5.500" strokeLinecap="round" />
                </svg>
                <svg width="58" height="48" viewBox="0 0 58 48">
                    <path d="M3 23L29 4L55 23M11 28V38Q11 42 15 42H43Q47 42 47 38V28" fill="none" stroke="#888" strokeWidth="5.500" strokeLinecap="round" />
                </svg>
                <svg width="50" height="48" viewBox="0 0 50 48">
                    <path d="M4 12H41Q46 12 46 17V37Q46 42 41 42H12" fill="none" stroke="#888" strokeWidth="5.500" strokeLinecap="round" />
                    <path d="M15 3V12H2Z" fill="#888" stroke="#888" />
                </svg>
            </SystemNav>
        </Screen>
    )
}

export default App
